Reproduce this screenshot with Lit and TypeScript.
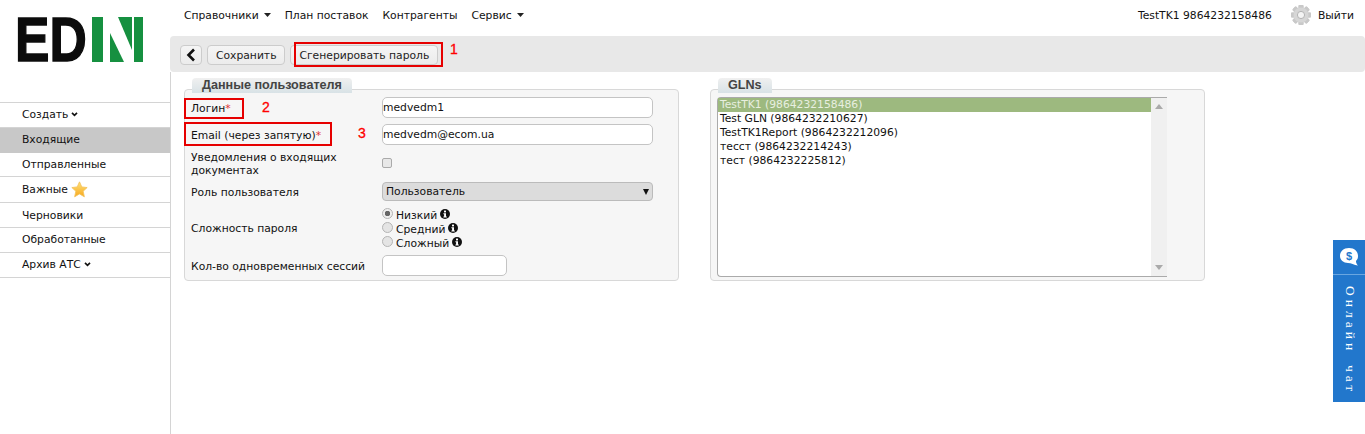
import { LitElement, html, css, svg } from 'lit';
import { customElement } from 'lit/decorators.js';

const infoIcon = html`<svg class="info" viewBox="0 0 10 10" width="10" height="10">
  <circle cx="5" cy="5" r="5" fill="#111"></circle>
  <rect x="4" y="1.6" width="2" height="1.8" fill="#fff"></rect>
  <path d="M3.4 4.2H6V7.4H6.8V8.4H3.4V7.4H4.1V5.2H3.4Z" fill="#fff"></path>
</svg>`;

const caret = html`<svg class="caret" viewBox="0 0 7 4" width="7" height="4"><path d="M0 0H7L3.5 4Z" fill="#222"></path></svg>`;

const chevron = html`<svg class="chev" viewBox="0 0 8 6" width="7" height="5"><path d="M1 1L4 4L7 1" fill="none" stroke="#111" stroke-width="2"></path></svg>`;

const star = html`<svg class="star" viewBox="0 0 20 20" width="17" height="17">
  <defs><linearGradient id="st" x1="0" y1="0" x2="0" y2="1"><stop offset="0" stop-color="#ffe27a"></stop><stop offset="1" stop-color="#f7a81e"></stop></linearGradient></defs>
  <path d="M10 1L12.7 7L19 7.7L14.3 12L15.7 18.6L10 15.2L4.3 18.6L5.7 12L1 7.7L7.3 7Z" fill="url(#st)" stroke="#f3c35c" stroke-width="1" stroke-linejoin="round"></path>
</svg>`;

const teeth = [0, 45, 90, 135, 180, 225, 270, 315];
const gear = html`<svg class="gear" viewBox="0 0 22 22" width="22" height="22">
  ${teeth.map((a) => svg`<rect x="8.5" y="1" width="5" height="20" rx="1" fill="#c9c9c9" transform="rotate(${a} 11 11)"></rect>`)}
  <circle cx="11" cy="11" r="7.5" fill="#d6d6d6"></circle>
  <circle cx="11" cy="11" r="3.6" fill="#f4f4f4" stroke="#b4b4b4"></circle>
</svg>`;

const menu = [
  { label: 'Создать', chev: true, h: 25, cls: '' },
  { label: 'Входящие', h: 25, cls: 'active' },
  { label: 'Отправленные', h: 24, cls: '' },
  { label: 'Важные', star: true, h: 26, cls: 'low' },
  { label: 'Черновики', h: 25, cls: 'low' },
  { label: 'Обработанные', h: 25, cls: '' },
  { label: 'Архив АТС', chev: true, h: 25, cls: '' },
];

const glns = [
  'TestTK1 (9864232158486)',
  'Test GLN (9864232210627)',
  'TestTK1Report (9864232212096)',
  'тесст (9864232214243)',
  'тест (9864232225812)',
];

@customElement('app-root')
export class AppRoot extends LitElement {
  static styles = css`
    :host {
      display: grid;
      grid-template-columns: 170px 1fr;
      grid-template-rows: 72px 362px;
      position: relative;
      height: 434px;
      overflow: hidden;
      background: #fff;
      color: #111;
      font-family: 'DejaVu Sans', sans-serif;
      font-size: 10.75px;
    }
    .logo {
      grid-row: 1 / 3;
      padding-top: 17px;
    }
    .logo-mark {
      display: flex;
      align-items: center;
      height: 45px;
      padding-left: 15px;
    }
    .logo-mark span {
      display: block;
      width: 77px;
      font-family: 'Liberation Sans', sans-serif;
      font-weight: 700;
      font-size: 63px;
      line-height: 45px;
      color: #0c0c0c;
      transform: scaleX(0.82);
      transform-origin: left center;
      -webkit-text-stroke: 1.4px #0c0c0c;
    }
    .side {
      margin-top: 40px;
      border-top: 1px solid #d4d4d4;
    }
    .side div {
      display: flex;
      align-items: center;
      gap: 3px;
      box-sizing: border-box;
      padding: 0 0 1px 22px;
      border-bottom: 1px solid #d4d4d4;
    }
    .side div.low {
      padding-bottom: 0;
    }
    .side div.active {
      background: #c8c8c8;
      border-bottom-color: #c8c8c8;
    }
    .right {
      grid-column: 2;
      grid-row: 1;
      min-width: 0;
    }
    .top {
      display: flex;
      align-items: center;
      height: 36px;
      padding: 0 11px 6px 14px;
      box-sizing: border-box;
    }
    .top .nav {
      display: flex;
      align-items: center;
      margin-right: 14px;
      gap: 5px;
    }
    .top .spacer {
      flex: 1;
    }
    .gear {
      margin: 0 6px 0 18px;
    }
    .toolbar {
      display: flex;
      align-items: center;
      height: 36px;
      padding: 2px 0 0 10px;
      gap: 5px;
      background: #e8e8e8;
      border-radius: 4px;
      box-sizing: border-box;
    }
    .btn {
      display: flex;
      align-items: center;
      justify-content: center;
      height: 20px;
      padding: 0 8px;
      box-sizing: border-box;
      background: linear-gradient(#f5f5f5, #ececec);
      border: 1px solid #ccc;
      border-radius: 4px;
      color: #222;
    }
    .btn.back {
      width: 22px;
      padding: 0;
    }
    .content {
      grid-column: 2;
      grid-row: 2;
      display: flex;
      gap: 31px;
      padding: 17px 0 0 13px;
      border-left: 1px solid #d4d4d4;
    }
    .panel {
      position: relative;
      width: 495px;
      height: 192px;
      box-sizing: border-box;
      background: #f6f6f6;
      border: 1px solid #d8d8d8;
      border-radius: 4px;
    }
    .legend {
      position: absolute;
      left: 7px;
      top: -12px;
      height: 15px;
      padding: 0 10px;
      line-height: 15px;
      font-family: 'Liberation Sans', sans-serif;
      font-size: 12.6px;
      font-weight: 700;
      color: #444;
      background: linear-gradient(#f0f0f0, #d8e2e6);
      border-radius: 4px 4px 0 0;
    }
    .form {
      display: grid;
      grid-template-columns: 191px 271px;
      grid-template-rows: 21px 21px 25px 19px 42px 21px;
      row-gap: 6px;
      align-items: center;
      padding: 7px 0 0 6px;
    }
    .form label {
      line-height: 13px;
      padding-top: 1px;
    }
    .req {
      color: #d33;
    }
    .form input[type='text'] {
      box-sizing: border-box;
      height: 21px;
      width: 271px;
      margin: 0;
      padding: 0;
      border: 1px solid #c4c4c4;
      border-radius: 5px;
      background: #fff;
      font: inherit;
      color: #111;
    }
    .form input.short[type='text'] {
      width: 125px;
    }
    .check {
      align-self: start;
      width: 10px;
      height: 10px;
      margin-top: 7px;
      box-sizing: border-box;
      border: 1px solid #aaa;
      border-radius: 2px;
      background: #e8e8e8;
    }
    .select {
      display: flex;
      align-items: center;
      justify-content: space-between;
      height: 19px;
      padding: 0 3px 0 3px;
      box-sizing: border-box;
      width: 271px;
      background: #dcdcdc;
      border: 1px solid #bbb;
      border-radius: 4px;
    }
    .radios {
      display: grid;
      grid-auto-rows: 14px;
    }
    .radios div {
      display: flex;
      align-items: center;
      gap: 3px;
      padding-top: 2px;
      box-sizing: border-box;
    }
    .radio {
      align-self: flex-start;
      width: 11px;
      height: 11px;
      box-sizing: border-box;
      border: 1px solid #b4b4b4;
      border-radius: 50%;
      background: #e4e4e4;
      margin-top: -1px;
    }
    .radio.on {
      background: radial-gradient(circle, #666 0 2.5px, #eee 3px);
    }
    .info {
      margin-top: -2px;
    }
    .list {
      display: flex;
      box-sizing: border-box;
      width: 450px;
      height: 180px;
      margin: 7px 0 0 6px;
      background: #fff;
      border: 1px solid #aaa;
      border-right: 0;
      border-radius: 4px 0 0 4px;
    }
    .options {
      flex: 1;
    }
    .options div {
      height: 14px;
      line-height: 13px;
      padding-left: 2px;
    }
    .options div.sel {
      background: #9db97f;
      color: #e8efe0;
    }
    .scroll {
      display: flex;
      flex-direction: column;
      justify-content: space-between;
      align-items: center;
      width: 16px;
      padding: 6px 0;
      box-sizing: border-box;
      background: #f0f0f0;
    }
    .tri {
      width: 0;
      height: 0;
      border-left: 4px solid transparent;
      border-right: 4px solid transparent;
    }
    .tri.up {
      border-bottom: 5px solid #aaa;
    }
    .tri.down {
      border-top: 5px solid #aaa;
    }
    .mark {
      position: absolute;
      box-sizing: border-box;
      border: 2px solid #e60000;
    }
    .num {
      position: absolute;
      color: #f00;
      font-family: 'Liberation Sans', sans-serif;
      font-size: 14px;
      line-height: 16px;
      -webkit-text-stroke: 0.3px #f00;
    }
    .chat {
      position: absolute;
      left: 1333px;
      top: 240px;
      width: 32px;
      height: 162px;
      background: #2277cc;
      color: #fff;
    }
    .chat-head {
      display: flex;
      align-items: center;
      justify-content: center;
      height: 34px;
      border-bottom: 1px solid #6aa6e0;
    }
    .chat-text {
      display: block;
      margin: 11px 0 0 9px;
      writing-mode: vertical-rl;
      font-family: 'Liberation Serif', serif;
      font-size: 13.5px;
      letter-spacing: 4px;
      white-space: pre;
    }
  `;

  render() {
    return html`
      <div class="logo">
        <div class="logo-mark">
          <span>ED</span>
          <svg viewBox="0 0 51 45" width="51" height="45">
            <rect width="11" height="45" fill="#169040"></rect>
            <path d="M18 16V45H32Z" fill="#169040"></path>
            <path d="M26 0H40V33Z" fill="#169040"></path>
            <rect x="42" width="9" height="45" fill="#169040"></rect>
          </svg>
        </div>
        <div class="side">
          ${menu.map(
            (m) => html`<div class=${m.cls} style="height:${m.h}px">
              ${m.label}${m.chev ? chevron : ''}${m.star ? star : ''}
            </div>`,
          )}
        </div>
      </div>
      <div class="right">
        <div class="top">
          <span class="nav">Справочники ${caret}</span>
          <span class="nav">План поставок</span>
          <span class="nav">Контрагенты</span>
          <span class="nav">Сервис ${caret}</span>
          <span class="spacer"></span>
          <span>TestTK1 9864232158486</span>
          ${gear}
          <span>Выйти</span>
        </div>
        <div class="toolbar">
          <span class="btn back">
            <svg viewBox="0 0 10 14" width="10" height="14"><path d="M8 1.5L2.5 7L8 12.5" fill="none" stroke="#111" stroke-width="2.6"></path></svg>
          </span>
          <span class="btn">Сохранить</span>
          <span class="btn">Сгенерировать пароль</span>
        </div>
      </div>
      <div class="content">
        <section class="panel">
          <div class="legend">Данные пользователя</div>
          <div class="form">
            <label>Логин<span class="req">*</span></label>
            <input type="text" .value=${'medvedm1'} />
            <label>Email (через запятую)<span class="req">*</span></label>
            <input type="text" .value=${'medvedm@ecom.ua'} />
            <label>Уведомления о входящих документах</label>
            <span class="check"></span>
            <label>Роль пользователя</label>
            <div class="select"><span>Пользователь</span><svg viewBox="0 0 7 7" width="6" height="6"><path d="M0 0H7L3.5 7Z" fill="#111"></path></svg></div>
            <label>Сложность пароля</label>
            <div class="radios">
              <div><span class="radio on"></span>Низкий ${infoIcon}</div>
              <div><span class="radio"></span>Средний ${infoIcon}</div>
              <div><span class="radio"></span>Сложный ${infoIcon}</div>
            </div>
            <label>Кол-во одновременных сессий</label>
            <input class="short" type="text" />
          </div>
        </section>
        <section class="panel">
          <div class="legend">GLNs</div>
          <div class="list">
            <div class="options">
              ${glns.map((g, i) => html`<div class=${i === 0 ? 'sel' : ''}>${g}</div>`)}
            </div>
            <div class="scroll"><span class="tri up"></span><span class="tri down"></span></div>
          </div>
        </section>
      </div>

      <div class="mark" style="left:294px;top:42px;width:149px;height:25px"></div>
      <div class="mark" style="left:184px;top:98px;width:60px;height:21px"></div>
      <div class="mark" style="left:184px;top:122px;width:148px;height:24px"></div>
      <span class="num" style="left:450px;top:41px">1</span>
      <span class="num" style="left:262px;top:99px">2</span>
      <span class="num" style="left:358px;top:125px">3</span>

      <div class="chat">
        <div class="chat-head">
          <svg viewBox="0 0 22 20" width="22" height="20">
            <path d="M11 1C5.5 1 2 4.5 2 9C2 13 5.5 16 10 16C13 16 16 18 20 18.5C18.5 17 18 15.5 18 14C19.5 12.5 20 11 20 9C20 4.5 16.5 1 11 1Z" fill="#fff"></path>
            <text x="11" y="13" text-anchor="middle" font-family="Liberation Sans" font-weight="700" font-size="11" fill="#2277cc">$</text>
          </svg>
        </div>
        <span class="chat-text">Онлайн\u2002чат</span>
      </div>
    `;
  }
}
